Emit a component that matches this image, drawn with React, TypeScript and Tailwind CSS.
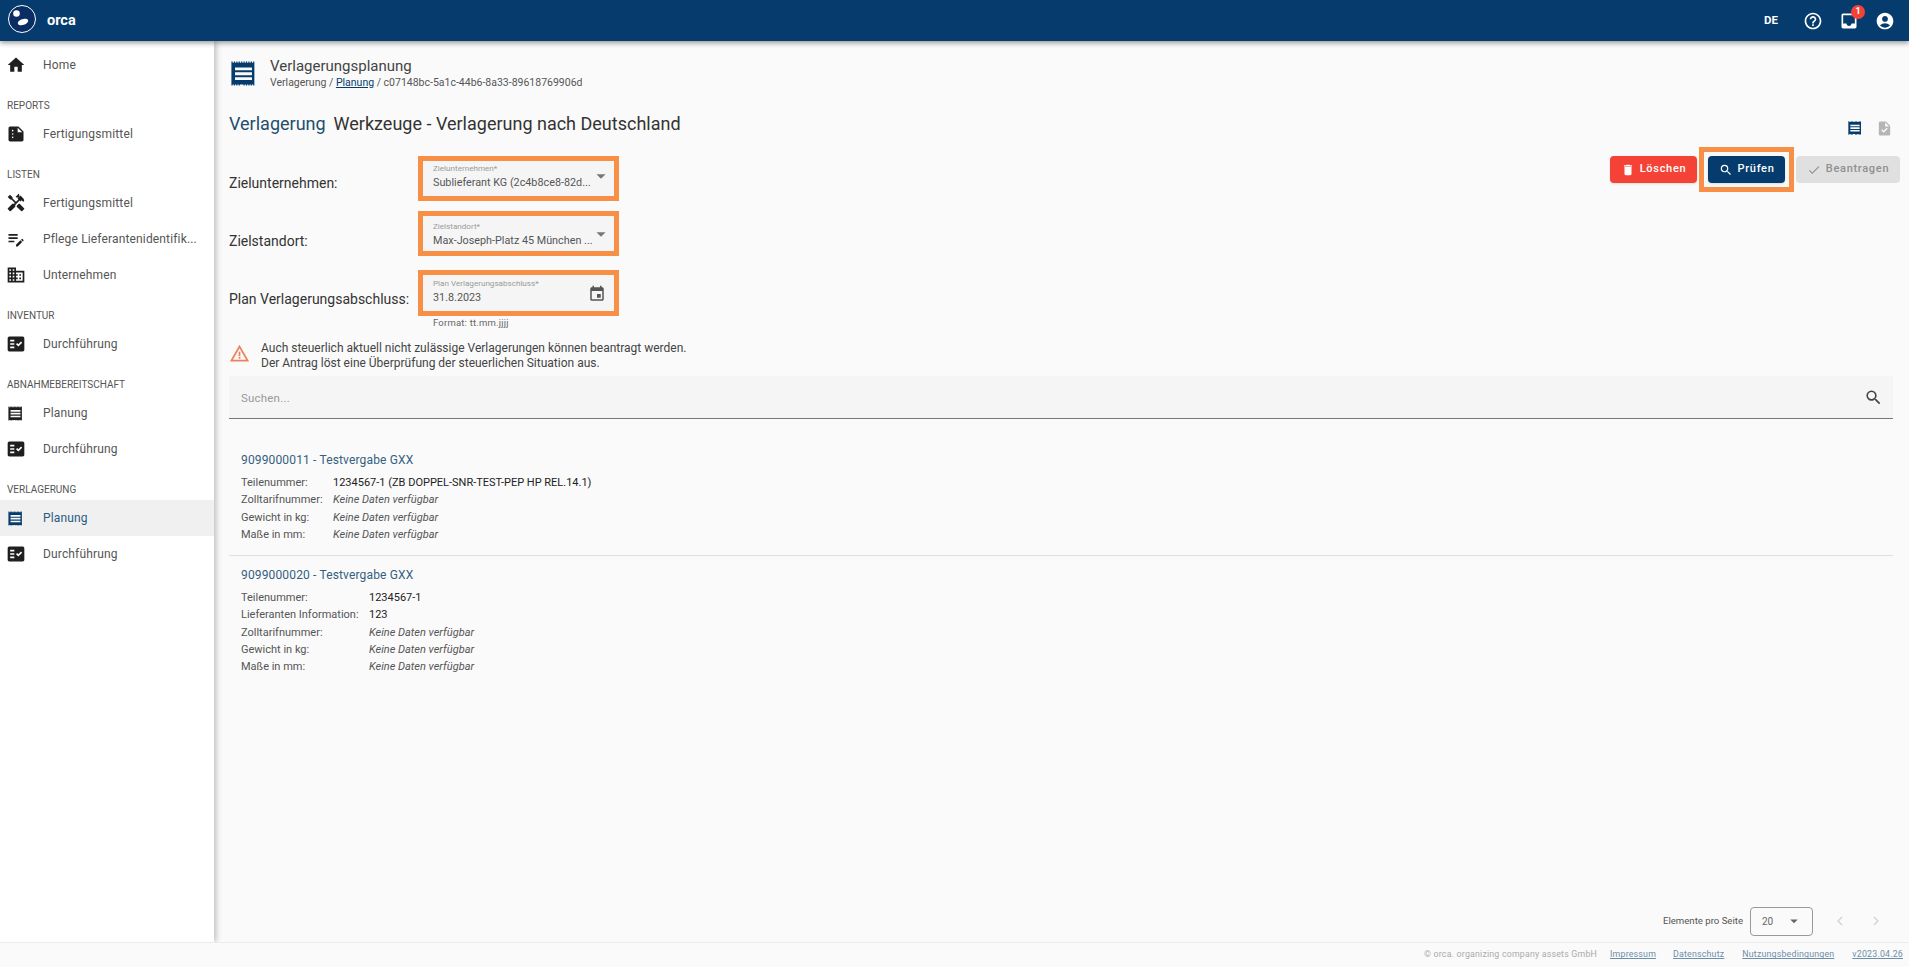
import React from 'react';
import {
  MdHome, MdSummarize, MdHandyman, MdEditNote, MdDomain, MdFactCheck, MdHelpOutline, MdInbox,
  MdAccountCircle, MdTask, MdDelete, MdSearch, MdCheck, MdEvent, MdWarningAmber,
  MdArrowDropDown, MdChevronLeft, MdChevronRight,
} from 'react-icons/md';

// stamp-like list icon used for "Planung"
function PlanIcon({ className }: { className?: string }) {
  return (
    <svg viewBox="0 0 24 24" className={className} fill="currentColor">
      <path d="M2 2h1v1h1V2h1v1h1V2h1v1h1V2h1v1h1V2h1v1h1V2h1v1h1V2h1v1h1V2h1v1h1V2h1v1h1V2h1v20h-1v-1h-1v1h-1v-1h-1v1h-1v-1h-1v1h-1v-1h-1v1h-1v-1H9v1H8v-1H7v1H6v-1H5v1H4v-1H3v1H2z" />
      <path d="M5 7h14v2.4H5zM5 11h14v2.4H5zM5 15h14v2.4H5z" fill="#fafafa" />
    </svg>
  );
}

function Logo() {
  return (
    <svg viewBox="0 0 30 30" className="w-[30px] h-[30px] -mt-[3px]">
      <circle cx="15" cy="15" r="13.5" fill="#0a2d63" stroke="#fff" strokeWidth="1" />
      <circle cx="9.5" cy="9.5" r="3.3" fill="#fff" />
      <ellipse cx="16" cy="18" rx="5.4" ry="3" fill="#fff" transform="rotate(-18 16 18)" />
    </svg>
  );
}

type NavItem = { label: string; icon: React.ReactNode; active?: boolean };
type NavSection = { title: string; items: NavItem[] };

const iconCls = 'w-[17px] h-[17px] ml-[1px]';

const sections: NavSection[] = [
  { title: 'REPORTS', items: [{ label: 'Fertigungsmittel', icon: <MdSummarize className="w-[20px] h-[20px]" /> }] },
  {
    title: 'LISTEN',
    items: [
      { label: 'Fertigungsmittel', icon: <MdHandyman className="w-[20px] h-[20px]" /> },
      { label: 'Pflege Lieferantenidentifik...', icon: <MdEditNote className="w-[20px] h-[20px]" /> },
      { label: 'Unternehmen', icon: <MdDomain className="w-[20px] h-[20px]" /> },
    ],
  },
  { title: 'INVENTUR', items: [{ label: 'Durchführung', icon: <MdFactCheck className="w-[20px] h-[20px]" /> }] },
  {
    title: 'ABNAHMEBEREITSCHAFT',
    items: [
      { label: 'Planung', icon: <PlanIcon className={iconCls} /> },
      { label: 'Durchführung', icon: <MdFactCheck className="w-[20px] h-[20px]" /> },
    ],
  },
  {
    title: 'VERLAGERUNG',
    items: [
      { label: 'Planung', icon: <PlanIcon className={iconCls} />, active: true },
      { label: 'Durchführung', icon: <MdFactCheck className="w-[20px] h-[20px]" /> },
    ],
  },
];

function NavRow({ item }: { item: NavItem }) {
  return (
    <div className={`h-9 flex items-center pl-[6px] ${item.active ? 'bg-[#f0f0f0] text-[#053c6d]' : 'text-[#1f1f1f]'}`}>
      <span className="w-[37px] shrink-0 flex items-center">{item.icon}</span>
      <span className={`text-[12px] tracking-[0.15px] whitespace-nowrap ${item.active ? 'text-[#2a5a80]' : 'text-[#555]'}`}>{item.label}</span>
    </div>
  );
}

function Sidebar() {
  return (
    <aside className="w-[214px] shrink-0 bg-white pt-[6px] shadow-[2px_0_6px_rgba(0,0,0,0.25)] z-10">
      <NavRow item={{ label: 'Home', icon: <MdHome className="w-[20px] h-[20px]" /> }} />
      {sections.map((s) => (
        <div key={s.title} className="mt-3">
          <div className="h-[21px] leading-[21px] pl-[7px] text-[10px] text-[#555]">{s.title}</div>
          {s.items.map((i, idx) => (
            <NavRow key={idx} item={i} />
          ))}
        </div>
      ))}
    </aside>
  );
}

function Field({ label, value, icon, pad }: { label: string; value: string; icon: React.ReactNode; pad: string }) {
  return (
    <div className="w-[201px] border-[5px] border-[#f79046] bg-[#f5f5f5] flex items-start pl-[10px] pr-[2px] h-full">
      <div className={`flex-1 min-w-0 ${pad}`}>
        <div className="text-[8.1px] leading-[12px] text-[#9a9a9a]">{label}</div>
        <div className="text-[10.8px] leading-[17px] text-[#555] whitespace-nowrap">{value}</div>
      </div>
      {icon}
    </div>
  );
}

function FormRow({ label, className, labelPad, children }: { label: string; className: string; labelPad: string; children: React.ReactNode }) {
  return (
    <div className={`flex items-center ${className}`}>
      <div className={`w-[189px] shrink-0 text-[14px] text-[#333] whitespace-nowrap ${labelPad}`}>{label}</div>
      {children}
    </div>
  );
}

function Details({ rows, labelWidth }: { rows: [string, string, boolean?][]; labelWidth: string }) {
  return (
    <div className="text-[11px] leading-[17.3px]">
      {rows.map(([k, v, strong]) => (
        <div key={k} className="flex">
          <span className={`${labelWidth} text-[#555]`}>{k}</span>
          {strong ? <span className="text-[#222]">{v}</span> : <span className="italic text-[#555]">{v}</span>}
        </div>
      ))}
    </div>
  );
}

export default function App() {
  return (
    <div className="h-screen flex flex-col bg-[#fafafa] overflow-hidden font-['Roboto',sans-serif]">
      <header className="h-[41px] shrink-0 bg-[#053c6d] flex items-center pl-[7px] pr-[14px] text-white shadow-[0_2px_5px_rgba(0,0,0,0.4)] z-20">
        <Logo />
        <span className="ml-[10px] font-bold text-[14.5px]">orca</span>
        <span className="ml-auto text-[11.5px] font-bold">DE</span>
        <MdHelpOutline className="ml-[25px] w-[20px] h-[20px]" />
        <span className="relative ml-[16px]">
          <MdInbox className="w-[20px] h-[20px]" />
          <span className="absolute -top-[6px] left-[12px] w-[14px] h-[14px] rounded-full bg-[#f44336] text-[9px] font-bold flex items-center justify-center">1</span>
        </span>
        <MdAccountCircle className="ml-[16px] w-[20px] h-[20px]" />
      </header>

      <div className="flex-1 flex min-h-0">
        <Sidebar />
        <main className="flex-1 min-w-0 flex flex-col pl-[15px] pr-[16px]">
          <div className="flex items-center h-[50px] mt-[7px]">
            <PlanIcon className="w-[29px] h-[29px] text-[#053c6d]" />
            <div className="ml-[12px]">
              <div className="text-[15px] leading-[19px] text-[#444]">Verlagerungsplanung</div>
              <div className="text-[10.5px] leading-[13px] text-[#555]">
                Verlagerung / <span className="underline text-[#053c6d]">Planung</span> / c07148bc-5a1c-44b6-8a33-89618769906d
              </div>
            </div>
          </div>

          <div className="flex items-center justify-between mt-[11px] h-[28px]">
            <h2 className="text-[18px]">
              <span className="text-[#1f4e6f]">Verlagerung</span>
              <span className="ml-[8px] text-[#333]">Werkzeuge - Verlagerung nach Deutschland</span>
            </h2>
            <div className="flex items-center gap-[13px] pt-[10px]">
              <PlanIcon className="w-[16px] h-[16px] text-[#053c6d]" />
              <MdTask className="w-[17px] h-[17px] text-[#b5b5b5]" />
            </div>
          </div>

          <div className="flex justify-between items-start mt-[19px]">
            <div>
              <FormRow label="Zielunternehmen:" className="h-[45px]" labelPad="pt-[9px]">
                <Field
                  pad="pt-[1px]"
                  label="Zielunternehmen*"
                  value="Sublieferant KG (2c4b8ce8-82d..."
                  icon={<MdArrowDropDown className="w-[22px] h-[22px] text-[#777] mt-[4px]" />}
                />
              </FormRow>
              <FormRow label="Zielstandort:" className="h-[45px] mt-[10px]" labelPad="pt-[16px]">
                <Field
                  pad="pt-[4px]"
                  label="Zielstandort*"
                  value="Max-Joseph-Platz 45 München ..."
                  icon={<MdArrowDropDown className="w-[22px] h-[22px] text-[#777] mt-[7px]" />}
                />
              </FormRow>
              <FormRow label="Plan Verlagerungsabschluss:" className="h-[46px] mt-[14px]" labelPad="pt-[12px]">
                <Field
                  pad="pt-[2px]"
                  label="Plan Verlagerungsabschluss*"
                  value="31.8.2023"
                  icon={<MdEvent className="w-[18px] h-[18px] text-[#555] mt-[10px] mr-[6px]" />}
                />
              </FormRow>
              <div className="ml-[204px] text-[9.5px] leading-[14px] text-[#666] tracking-[0.2px]">Format: tt.mm.jjjj</div>
            </div>

            <div className="flex items-center -mt-[9px] -mr-[7px]">
              <button className="h-[27px] w-[87px] rounded bg-[#f44336] text-white text-[11px] font-medium tracking-[0.7px] flex items-center justify-center gap-[5px] shadow-sm">
                <MdDelete className="w-[14px] h-[14px]" /> Löschen
              </button>
              <div className="ml-[2px] border-[5px] border-[#f79046] p-[4px]">
                <button className="h-[27px] w-[77px] rounded bg-[#053c6d] text-white text-[11px] font-medium tracking-[0.7px] flex items-center justify-center gap-[5px] shadow-sm">
                  <MdSearch className="w-[14px] h-[14px]" /> Prüfen
                </button>
              </div>
              <button className="ml-[2px] h-[27px] w-[104px] rounded bg-[#e0e0e0] text-[#8f8f8f] text-[11px] font-medium tracking-[0.7px] flex items-center justify-center gap-[5px]">
                <MdCheck className="w-[14px] h-[14px]" /> Beantragen
              </button>
            </div>
          </div>

          <div className="flex items-start mt-[11px] h-[30px]">
            <MdWarningAmber className="w-[21px] h-[21px] text-[#f0805a] mt-[2px]" />
            <div className="ml-[11px] text-[12px] leading-[14.5px] text-[#444]">
              Auch steuerlich aktuell nicht zulässige Verlagerungen können beantragt werden.
              <br />
              Der Antrag löst eine Überprüfung der steuerlichen Situation aus.
            </div>
          </div>

          <div className="h-[43px] mt-[5px] bg-[#f5f5f5] border-b border-[#777] flex items-center pl-[12px] pr-[10px]">
            <span className="text-[11.5px] text-[#999] tracking-[0.2px] pt-[3px]">Suchen...</span>
            <MdSearch className="ml-auto w-[19px] h-[19px] text-[#444]" />
          </div>

          <section className="pl-[12px] pt-[33px] pb-[12px] border-b border-[#e0e0e0]">
            <div className="text-[12px] leading-[17px] text-[#34607f] tracking-[0.15px] mb-[5px]">9099000011 - Testvergabe GXX</div>
            <Details
              labelWidth="w-[92px]"
              rows={[
                ['Teilenummer:', '1234567-1 (ZB DOPPEL-SNR-TEST-PEP HP REL.14.1)', true],
                ['Zolltarifnummer:', 'Keine Daten verfügbar'],
                ['Gewicht in kg:', 'Keine Daten verfügbar'],
                ['Maße in mm:', 'Keine Daten verfügbar'],
              ]}
            />
          </section>
          <section className="pl-[12px] pt-[11px]">
            <div className="text-[12px] leading-[17px] text-[#34607f] tracking-[0.15px] mb-[5px]">9099000020 - Testvergabe GXX</div>
            <Details
              labelWidth="w-[128px]"
              rows={[
                ['Teilenummer:', '1234567-1', true],
                ['Lieferanten Information:', '123', true],
                ['Zolltarifnummer:', 'Keine Daten verfügbar'],
                ['Gewicht in kg:', 'Keine Daten verfügbar'],
                ['Maße in mm:', 'Keine Daten verfügbar'],
              ]}
            />
          </section>

          <div className="mt-auto h-[42px] flex items-center justify-end text-[9.6px] text-[#555] pr-[8px]">
            <span>Elemente pro Seite</span>
            <div className="ml-[7px] w-[63px] h-[29px] border border-[#999] rounded flex items-center pl-[11px] pr-[9px]">
              <span className="text-[10px] text-[#666]">20</span>
              <MdArrowDropDown className="ml-auto w-[18px] h-[18px] text-[#666]" />
            </div>
            <MdChevronLeft className="ml-[18px] w-[18px] h-[18px] text-[#d5d5d5]" />
            <MdChevronRight className="ml-[18px] w-[18px] h-[18px] text-[#d5d5d5]" />
          </div>
        </main>
      </div>

      <footer className="h-[25px] shrink-0 border-t border-[#ececec] bg-[#fafafa] flex items-center justify-end pr-[6px] text-[8.8px] text-[#aaa] tracking-[0.2px] z-10">
        <span>© orca. organizing company assets GmbH</span>
        <span className="ml-[13px] underline text-[#6d8ea8]">Impressum</span>
        <span className="ml-[17px] underline text-[#6d8ea8]">Datenschutz</span>
        <span className="ml-[18px] underline text-[#6d8ea8]">Nutzungsbedingungen</span>
        <span className="ml-[18px] underline text-[#6d8ea8]">v2023.04.26</span>
      </footer>
    </div>
  );
}
